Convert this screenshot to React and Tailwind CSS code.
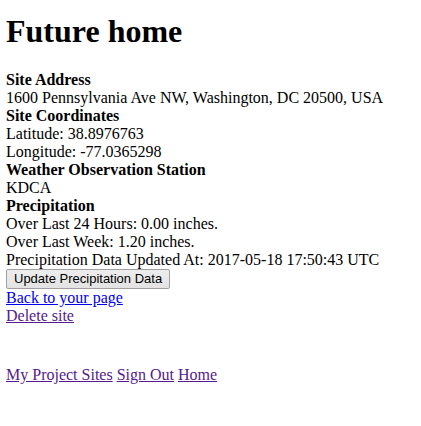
export default function App() {
  return (
    <div className="font-['Liberation_Serif',serif] text-[16px] leading-[normal] text-black bg-white min-h-screen px-[6px] pt-[13px]">
      <h1 className="text-[32px] font-bold mb-[21px]">Future home</h1>

      <div>
        <div className="font-bold">Site Address</div>
        <div>1600 Pennsylvania Ave NW, Washington, DC 20500, USA</div>
        <div className="font-bold">Site Coordinates</div>
        <div>Latitude: 38.8976763</div>
        <div>Longitude: -77.0365298</div>
        <div className="font-bold">Weather Observation Station</div>
        <div>KDCA</div>
        <div className="font-bold">Precipitation</div>
        <div>Over Last 24 Hours: 0.00 inches.</div>
        <div>Over Last Week: 1.20 inches.</div>
        <div>Precipitation Data Updated At: 2017-05-18 17:50:43 UTC</div>
        <button className="font-['Liberation_Sans',sans-serif] text-[13px] leading-[14px] px-[7px] py-[2px] bg-gradient-to-b from-[#ededed] to-[#e3e3e3] border border-[#a0a0a0] rounded-[2px]">
          Update Precipitation Data
        </button>
        <div>
          <a href="#back" className="text-[#0000ee] underline">Back to your page</a>
        </div>
        <div>
          <a href="#delete" className="text-[#551a8b] underline">Delete site</a>
        </div>
      </div>

      <div className="mt-[41px] flex gap-[4px]">
        <a href="#sites" className="text-[#551a8b] underline">My Project Sites</a>
        <a href="#signout" className="text-[#551a8b] underline">Sign Out</a>
        <a href="#home" className="text-[#551a8b] underline">Home</a>
      </div>
    </div>
  );
}
